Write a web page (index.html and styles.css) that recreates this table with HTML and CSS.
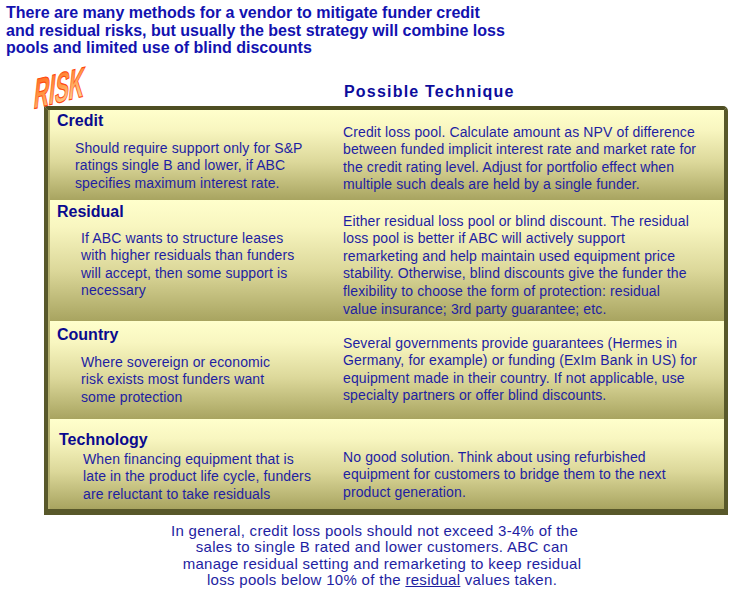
FILE: index.html
```html
<!DOCTYPE html>
<html lang="en">
<head>
<meta charset="utf-8">
<title>Vendor risk mitigation</title>
<link rel="stylesheet" href="styles.css">
</head>
<body>
<h1 class="title">There are many methods for a vendor to mitigate funder credit<br>and residual risks, but usually the best strategy will combine loss<br>pools and limited use of blind discounts</h1>
<div class="stage">
  <svg class="risk-logo" width="84" height="62" viewBox="0 0 84 62" aria-label="RISK">
    <defs>
      <linearGradient id="riskfill" x1="0" y1="0" x2="0.4" y2="1">
        <stop offset="0" stop-color="#ff5a18"/>
        <stop offset="0.5" stop-color="#ff9440"/>
        <stop offset="1" stop-color="#ffcf90"/>
      </linearGradient>
    </defs>
    <text x="0" y="0" transform="translate(9,48) rotate(-14) skewX(-20) scale(0.98,1.85)" font-family="Liberation Sans, Arial, sans-serif" font-weight="700" font-size="22" fill="url(#riskfill)" stroke="#ff4a10" stroke-width="0.6">RISK</text>
  </svg>
  <h2 class="col-head">Possible Technique</h2>
  <div class="panel">
    <div class="row row-credit">
      <div class="risk">
        <h3 class="label">Credit</h3>
        <p class="desc">Should require support only for S&amp;P<br>ratings single B and lower, if ABC<br>specifies maximum interest rate.</p>
      </div>
      <p class="tech">Credit loss pool. Calculate amount as NPV of difference<br>between funded implicit interest rate and market rate for<br>the credit rating level. Adjust for portfolio effect when<br>multiple such deals are held by a single funder.</p>
    </div>
    <div class="row row-residual">
      <div class="risk">
        <h3 class="label">Residual</h3>
        <p class="desc">If ABC wants to structure leases<br>with higher residuals than funders<br>will accept, then some support is<br>necessary</p>
      </div>
      <p class="tech">Either residual loss pool or blind discount. The residual<br>loss pool is better if ABC will actively support<br>remarketing and help maintain used equipment price<br>stability. Otherwise, blind discounts give the funder the<br>flexibility to choose the form of protection: residual<br>value insurance; 3rd party guarantee; etc.</p>
    </div>
    <div class="row row-country">
      <div class="risk">
        <h3 class="label">Country</h3>
        <p class="desc">Where sovereign or economic<br>risk exists most funders want<br>some protection</p>
      </div>
      <p class="tech">Several governments provide guarantees (Hermes in<br>Germany, for example) or funding (ExIm Bank in US) for<br>equipment made in their country. If not applicable, use<br>specialty partners or offer blind discounts.</p>
    </div>
    <div class="row row-tech">
      <div class="risk">
        <h3 class="label">Technology</h3>
        <p class="desc">When financing equipment that is<br>late in the product life cycle, funders<br>are reluctant to take residuals</p>
      </div>
      <p class="tech">No good solution. Think about using refurbished<br>equipment for customers to bridge them to the next<br>product generation.</p>
    </div>
  </div>
</div>
<p class="summary"><span class="first-line">In general, credit loss pools should not exceed 3-4% of the</span><br>sales to single B rated and lower customers. ABC can<br>manage residual setting and remarketing to keep residual<br>loss pools below 10% of the <u>residual</u> values taken.</p>
</body>
</html>
```

FILE: styles.css
```css
html, body {
  background: #ffffff;
}

body {
  margin: 0;
  font-family: "Liberation Sans", Arial, sans-serif;
  color: #1e1ea2;
}

.title {
  margin: 0;
  padding: 4px 0 0 6px;
  font-size: 16px;
  line-height: 17.7px;
  font-weight: 700;
  color: #1212b0;
}

.stage {
  position: relative;
  padding-top: 25.5px;
}

.risk-logo {
  position: absolute;
  left: 24px;
  top: 4px;
  z-index: 2;
  overflow: visible;
}

.col-head {
  margin: 0 0 5px 344px;
  font-size: 16px;
  line-height: 18px;
  letter-spacing: 1.2px;
  font-weight: 700;
  color: #0c0c9c;
}

.panel {
  position: relative;
  margin-left: 44px;
  width: 684px;
  box-sizing: border-box;
  border: 4px solid #58582a;
  border-bottom-width: 6px;
  border-top-color: #4e4e22;
  border-radius: 0 5px 0 0;
  background: #a6a25e;
  box-shadow: inset 2px 0 0 #b4b070;
}

.row {
  display: grid;
  grid-template-columns: 293px 1fr;
  box-sizing: border-box;
  background: linear-gradient(to bottom, #ffffcc 0%, #f8f6c0 22%, #dcd89a 58%, #a8a460 100%);
  margin-left: 2px;
}

.risk {
  padding-top: var(--label-pad);
}

.label {
  margin: 0;
  padding-left: var(--label-indent, 7px);
  font-size: 16px;
  line-height: 18px;
  font-weight: 700;
  color: #0a0a8e;
}

.desc,
.tech {
  margin: 0;
  font-size: 14px;
  line-height: 17.6px;
  letter-spacing: 0.12px;
  white-space: nowrap;
}

.desc {
  margin-top: var(--desc-gap);
  padding-left: var(--desc-indent);
}

.tech {
  padding-top: var(--tech-pad);
}

.row-credit {
  height: 90px;
  --label-pad: 2px;
  --desc-gap: 10px;
  --desc-indent: 25px;
  --tech-pad: 14px;
}

.row-residual {
  height: 121px;
  --label-pad: 3px;
  --desc-gap: 9px;
  --desc-indent: 31px;
  --tech-pad: 13px;
}

.row-country {
  height: 98px;
  --label-pad: 5px;
  --desc-gap: 10px;
  --desc-indent: 31px;
  --tech-pad: 14px;
}

.row-tech {
  height: 90px;
  --label-pad: 12px;
  --label-indent: 9px;
  --desc-gap: 2px;
  --desc-indent: 33px;
  --tech-pad: 30px;
}

.summary {
  margin: 8px 0 0 44px;
  width: 676px;
  text-align: center;
  font-size: 15px;
  line-height: 16.6px;
  letter-spacing: 0.3px;
  color: #1e1ea2;
}

.first-line {
  padding-right: 15px;
}
```
